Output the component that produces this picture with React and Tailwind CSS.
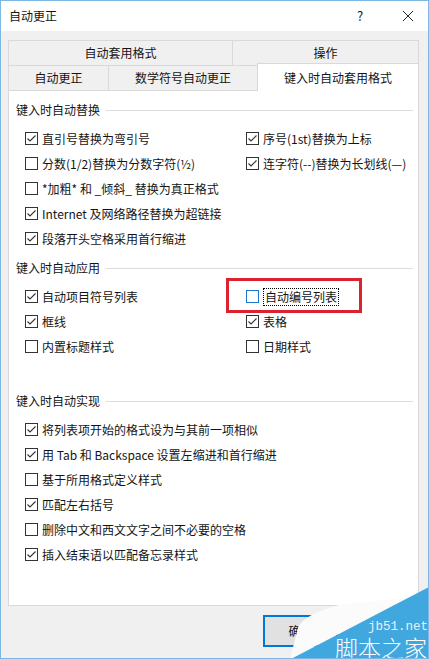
import React from "react";

const replaceRows = [
  [
    { label: "直引号替换为弯引号", checked: true },
    { label: "序号(1st)替换为上标", checked: true },
  ],
  [
    { label: "分数(1/2)替换为分数字符(½)", checked: false },
    { label: "连字符(--)替换为长划线(—)", checked: true },
  ],
  [{ label: "*加粗* 和 _倾斜_ 替换为真正格式", checked: false }],
  [{ label: "Internet 及网络路径替换为超链接", checked: true }],
  [{ label: "段落开头空格采用首行缩进", checked: true }],
];

const applyRows = [
  [
    { label: "自动项目符号列表", checked: true },
    { label: "自动编号列表", checked: false, focus: true },
  ],
  [
    { label: "框线", checked: true },
    { label: "表格", checked: true },
  ],
  [
    { label: "内置标题样式", checked: false },
    { label: "日期样式", checked: false },
  ],
];

const doRows = [
  [{ label: "将列表项开始的格式设为与其前一项相似", checked: true }],
  [{ label: "用 Tab 和 Backspace 设置左缩进和首行缩进", checked: true }],
  [{ label: "基于所用格式定义样式", checked: false }],
  [{ label: "匹配左右括号", checked: true }],
  [{ label: "删除中文和西文文字之间不必要的空格", checked: false }],
  [{ label: "插入结束语以匹配备忘录样式", checked: true }],
];

function CheckBox({ checked, focus }) {
  return (
    <span
      className={`w-[13px] h-[13px] shrink-0 border bg-white flex items-center justify-center ${
        focus ? "border-[#1a78cf]" : "border-[#333333]"
      }`}
    >
      {checked && (
        <svg width="11" height="11" viewBox="0 0 11 11">
          <path d="M1.5 5.5 L4 8 L9.5 2.5" fill="none" stroke="#333" strokeWidth="1.1" />
        </svg>
      )}
    </span>
  );
}

function Option({ label, checked, focus }) {
  return (
    <div className="relative h-[25px] flex items-center gap-[4px]">
      {focus && (
        <div className="absolute left-[-20px] top-[-6px] w-[136px] h-[35px] border-[3px] border-[#d9232e]" />
      )}
      <CheckBox checked={checked} focus={focus} />
      {focus ? (
        <span className="border border-dotted border-black px-px leading-[16px]">{label}</span>
      ) : (
        <span className="leading-[16px] whitespace-nowrap">{label}</span>
      )}
    </div>
  );
}

function Section({ title, rows, className }) {
  return (
    <div className={className}>
      <div className="h-[20px] flex items-center pl-[7px] pr-[5px]">
        <span className="leading-[16px]">{title}</span>
        <div className="flex-1 h-px bg-[#dcdcdc] ml-[6px]" />
      </div>
      <div className="pt-[6px] pl-[16px]">
        {rows.map((row, i) => (
          <div key={i} className="grid grid-cols-[221px_1fr]">
            {row.map((opt) => (
              <Option key={opt.label} {...opt} />
            ))}
          </div>
        ))}
      </div>
    </div>
  );
}

export default function App() {
  return (
    <div className="relative w-[429px] h-[659px] overflow-hidden bg-[#f0f0f0] border border-[#7db8e4] text-[12px] text-[#141414] font-['Noto_Sans_CJK_SC','Noto_Sans',sans-serif] flex flex-col">
      {/* title bar */}
      <div className="h-[30px] bg-white flex items-center pl-[8px]">
        <span className="flex-1">自动更正</span>
        <span className="w-[20px] text-center mr-[32px] text-[13px]">?</span>
        <svg width="12" height="12" viewBox="0 0 12 12" className="mr-[14px]">
          <path d="M1 1 L11 11 M11 1 L1 11" stroke="#222" strokeWidth="1" />
        </svg>
      </div>

      <div className="pl-[7px] pr-[9px] mt-[9px] flex flex-col">
        {/* tab row 1 */}
        <div className="flex h-[25px]">
          <div className="w-[224px] border-t border-l border-[#d9d9d9] flex items-center justify-center">
            自动套用格式
          </div>
          <div className="flex-1 border-t border-x border-[#d9d9d9] flex items-center justify-center">
            操作
          </div>
        </div>
        {/* tab row 2 */}
        <div className="flex items-end h-[27px] -mt-[2px]">
          <div className="w-[100px] h-[25px] border-t border-l border-[#d9d9d9] flex items-center justify-center">
            自动更正
          </div>
          <div className="w-[149px] h-[25px] border-t border-l border-[#d9d9d9] flex items-center justify-center">
            数学符号自动更正
          </div>
          <div className="relative z-10 flex-1 h-[28px] -mb-px bg-white border-t border-x border-[#d9d9d9] flex items-center justify-center">
            键入时自动套用格式
          </div>
        </div>

        {/* panel */}
        <div className="h-[516px] bg-white border border-[#d9d9d9] pt-[9px]">
          <Section title="键入时自动替换" rows={replaceRows} />
          <Section title="键入时自动应用" rows={applyRows} className="mt-[7px]" />
          <Section title="键入时自动实现" rows={doRows} className="mt-[32px]" />
        </div>

        {/* buttons */}
        <div className="flex mt-[9px] pl-[255px]">
          <button className="w-[75px] h-[32px] bg-[#e1e1e1] border-2 border-[#0078d7]">确定</button>
        </div>
      </div>

      {/* watermark */}
      <div className="absolute right-[-1px] bottom-[-1px] w-[140px] h-[75px]">
        <svg width="140" height="75" viewBox="0 0 140 75" className="absolute left-0 top-0">
          <path d="M54 20 Q 14 30 9 44 L1 75 L2 75 L118 14 Z" fill="#fbfbfb" />
          <polygon points="140,3 140,75 2,75" fill="#41a7df" />
        </svg>
        <span className="absolute left-[79px] top-[37px] text-[12.5px] leading-[13px] text-[#e4f1fa] font-['Liberation_Mono',monospace]">
          jb51.net
        </span>
        <span className="absolute left-[46px] top-[50px] text-[23px] leading-[26px] text-white font-light whitespace-nowrap">
          脚本之家
        </span>
      </div>
    </div>
  );
}
